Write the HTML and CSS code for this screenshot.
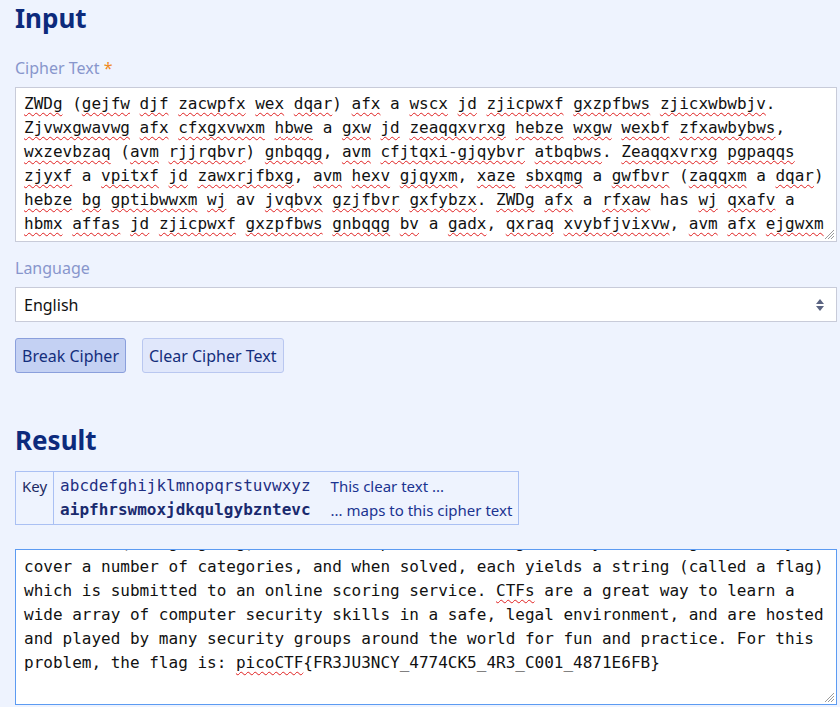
FILE: index.html
```html
<!DOCTYPE html>
<html lang="en">
<head>
<meta charset="utf-8">
<title>Substitution Cipher Breaker</title>
<link rel="stylesheet" href="styles.css">
</head>
<body>
<main class="page">
  <h1 class="heading">Input</h1>
  <div class="label">Cipher Text <span class="required">*</span></div>
  <div class="field">
    <div class="textbox" id="cipher" data-ok="a has av">ZWDg (gejfw djf zacwpfx wex dqar) afx a wscx jd zjicpwxf gxzpfbws zjicxwbwbjv. Zjvwxgwavwg afx cfxgxvwxm hbwe a gxw jd zeaqqxvrxg hebze wxgw wexbf zfxawbybws, wxzevbzaq (avm rjjrqbvr) gnbqqg, avm cfjtqxi-gjqybvr atbqbws. Zeaqqxvrxg pgpaqqs zjyxf a vpitxf jd zawxrjfbxg, avm hexv gjqyxm, xaze sbxqmg a gwfbvr (zaqqxm a dqar) hebze bg gptibwwxm wj av jvqbvx gzjfbvr gxfybzx. ZWDg afx a rfxaw has wj qxafv a hbmx affas jd zjicpwxf gxzpfbws gnbqqg bv a gadx, qxraq xvybfjvixvw, avm afx ejgwxm avm cqasxm ts iavs gxzpfbws rfjpcg afjpvm wex hjfqm djf dpv avm cfazwbzx. Djf webg cfjtqxi, wex dqar bg: cbzjZWD{DF3OP3VZS_4774ZN5_4F3_Z001_4871X6DT}</div>
    <svg class="grip" width="11" height="11" viewBox="0 0 11 11"><path d="M10 1 L1 10 M10 4 L4 10 M10 7 L7 10" stroke="#9a9a9a" stroke-width="1"/></svg>
  </div>

  <div class="label label-gap">Language</div>
  <div class="select">
    <span>English</span>
    <svg class="arrows" width="8" height="12" viewBox="0 0 8 12"><path d="M4 0 L8 5 L0 5 Z M0 7 L8 7 L4 12 Z" fill="#5b6482"/></svg>
  </div>

  <div class="actions">
    <button class="btn btn-primary">Break Cipher</button>
    <button class="btn btn-secondary">Clear Cipher Text</button>
  </div>

  <h1 class="heading result-heading">Result</h1>
  <table class="key-table">
    <tr class="row-top">
      <td class="key-cell" rowspan="2">Key</td>
      <td class="alpha">abcdefghijklmnopqrstuvwxyz</td>
      <td class="desc">This clear text ...</td>
    </tr>
    <tr class="row-bottom">
      <td class="alpha alpha-bold">aipfhrswmoxjdkqulgybzntevc</td>
      <td class="desc">... maps to this cipher text</td>
    </tr>
  </table>

  <div class="field result-field">
    <div class="textbox result-box" id="result">CTFs (short for capture the flag) are a type of computer security competition. Contestants are presented with a set of challenges which test their creativity, technical (and googling) skills, and problem-solving ability. Challenges usually cover a number of categories, and when solved, each yields a string (called a flag) which is submitted to an online scoring service. <span class="typo">CTFs</span> are a great way to learn a wide array of computer security skills in a safe, legal environment, and are hosted and played by many security groups around the world for fun and practice. For this problem, the flag is: <span class="typo">picoCTF</span>{FR3JU3NCY_4774CK5_4R3_C001_4871E6FB}</div>
    <svg class="grip" width="11" height="11" viewBox="0 0 11 11"><path d="M10 1 L1 10 M10 4 L4 10 M10 7 L7 10" stroke="#9a9a9a" stroke-width="1"/></svg>
  </div>
</main>
<script src="script.js"></script>
</body>
</html>
```

FILE: styles.css
```css
* { box-sizing: border-box; }
html, body { margin: 0; }
body {
  background: #eef3fe;
  font-family: "Noto Sans", "DejaVu Sans", sans-serif;
  color: #1b2559;
}
.page { padding: 0 3px 0 15px; }
.heading {
  margin: 2px 0 0;
  font-size: 26px;
  line-height: 32px;
  font-weight: 700;
  color: #0c2a7c;
}
.label {
  margin: 22px 0 7px;
  font-size: 16px;
  line-height: 24px;
  color: #8896cc;
}
.label-gap { margin-top: 14px; }
.required { color: #f08a24; }
.field { position: relative; }
.textbox {
  height: 155px;
  background: #fff;
  border: 1px solid #c8cbd9;
  padding: 4px 8px;
  font-family: "DejaVu Sans Mono", monospace;
  font-size: 16px;
  line-height: 24px;
  color: #111;
  overflow: hidden;
  word-wrap: break-word;
}
.typo {
  text-decoration: underline wavy #e02020;
  text-decoration-thickness: 1px;
  text-underline-offset: 3px;
  text-decoration-skip-ink: none;
}
.grip { position: absolute; right: 2px; bottom: 2px; }
.select {
  height: 35px;
  background: #fff;
  border: 1px solid #c8cbd9;
  padding: 0 12px 0 8px;
  display: flex;
  align-items: center;
  justify-content: space-between;
  font-size: 16px;
  color: #111;
}
.actions { display: flex; gap: 16px; margin-top: 16px; }
.btn {
  height: 35px;
  padding: 0 6px;
  font-family: "Noto Sans", "DejaVu Sans", sans-serif;
  font-size: 16px;
  color: #142e7c;
  border-radius: 3px;
}
.btn-primary { background: #c4d1f3; border: 1px solid #8a9fdc; }
.btn-secondary { background: #e0e7fb; border: 1px solid #b9c7f0; }
.result-heading { margin-top: 51px; }
.key-table {
  margin-top: 15px;
  border: 1px solid #aac0f3;
  border-collapse: collapse;
  font-size: 15px;
  line-height: 24px;
}
.key-table td { padding: 0 6px; white-space: nowrap; }
.row-top td { padding-top: 2px; }
.row-bottom td { padding-bottom: 2px; }
.key-cell { vertical-align: top; border-right: 1px solid #aac0f3; color: #1d2a63; padding-bottom: 2px; }
.alpha {
  font-family: "DejaVu Sans Mono", monospace;
  font-size: 16px;
  color: #1e2f82;
  padding-right: 14px !important;
}
.alpha-bold { font-weight: 700; color: #1a2a6e; }
.desc { color: #1b3391; }
.result-field { margin-top: 24px; }
.result-box {
  border-color: #5c9bf2;
  padding-bottom: 32px;
  height: 156px;
}
```

FILE: script.js
```js
(function () {
  var el = document.getElementById('cipher');
  var ok = (el.getAttribute('data-ok') || '').split(' ');
  var text = el.textContent;
  el.innerHTML = text.replace(/[A-Za-z][A-Za-z-]*[A-Za-z]|[A-Za-z]/g, function (w) {
    return ok.indexOf(w) >= 0 ? w : '<span class="typo">' + w + '</span>';
  });
  document.getElementById('result').scrollTop = 71;
})();
```
